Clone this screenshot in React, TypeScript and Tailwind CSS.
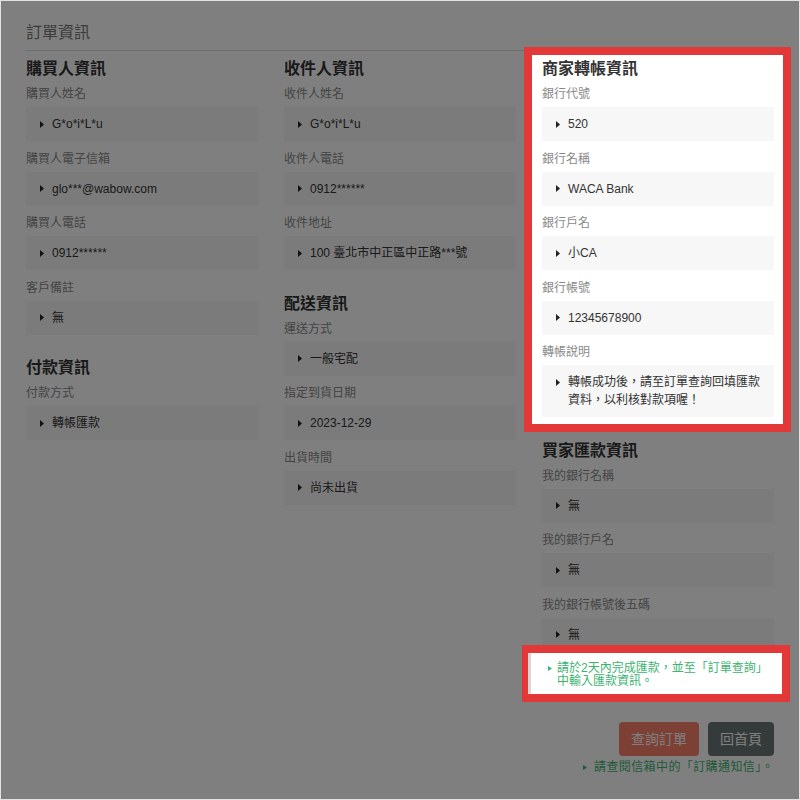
import React from "react";

function Caret({ color = "#222", w = 4, h = 7 }: { color?: string; w?: number; h?: number }) {
  return (
    <svg width={w} height={h} viewBox={`0 0 ${w} ${h}`} className="block">
      <path d={`M0 0 L${w} ${h / 2} L0 ${h} Z`} fill={color} />
    </svg>
  );
}

function Field({ label, value }: { label: string; value: string }) {
  return (
    <div className="pb-[7.5px]">
      <div className="text-[12px] leading-[20px] text-[#888]">{label}</div>
      <div className="mt-[3px] flex items-start bg-[#f7f7f7] py-[8px] pl-[14px] pr-[14px] text-[12px] leading-[18px] text-[#333]">
        <span className="flex h-[18px] w-[4px] shrink-0 items-center">
          <Caret />
        </span>
        <span className="ml-[8px]">{value}</span>
      </div>
    </div>
  );
}

function Heading({ children }: { children: React.ReactNode }) {
  return <div className="mb-[3px] text-[16px] font-semibold leading-[24px] text-[#333]">{children}</div>;
}

export default function App() {
  return (
    <div className="relative h-[800px] w-[800px] overflow-hidden border border-[#e2e2e2] bg-white [font-family:'Liberation_Sans','Noto_Sans_CJK_TC',sans-serif]">
      <div className="px-[25px] pt-[21px]">
        <div className="border-b border-[#ddd] pb-[6px] text-[16px] leading-[22px] text-[#777]">訂單資訊</div>

        <div className="grid grid-cols-3 items-start gap-x-[26px]">
          {/* Column 1 */}
          <div>
            <div className="mt-[6px]">
              <Heading>購買人資訊</Heading>
              <Field label="購買人姓名" value="G*o*i*L*u" />
              <Field label="購買人電子信箱" value="glo***@wabow.com" />
              <Field label="購買人電話" value="0912******" />
              <Field label="客戶備註" value="無" />
            </div>
            <div className="mt-[14px]">
              <Heading>付款資訊</Heading>
              <Field label="付款方式" value="轉帳匯款" />
            </div>
          </div>

          {/* Column 2 */}
          <div>
            <div className="mt-[6px]">
              <Heading>收件人資訊</Heading>
              <Field label="收件人姓名" value="G*o*i*L*u" />
              <Field label="收件人電話" value="0912******" />
              <Field label="收件地址" value="100 臺北市中正區中正路***號" />
            </div>
            <div className="mt-[14px]">
              <Heading>配送資訊</Heading>
              <Field label="運送方式" value="一般宅配" />
              <Field label="指定到貨日期" value="2023-12-29" />
              <Field label="出貨時間" value="尚未出貨" />
            </div>
          </div>

          {/* Column 3 */}
          <div>
            <div className="relative z-20 mt-[6px]">
              <div className="absolute -bottom-[7.5px] -left-[18px] -right-[17px] -top-[10px] -z-10 border-[8px] border-[#e23838] bg-white" />
              <Heading>商家轉帳資訊</Heading>
              <Field label="銀行代號" value="520" />
              <Field label="銀行名稱" value="WACA Bank" />
              <Field label="銀行戶名" value="小CA" />
              <Field label="銀行帳號" value="12345678900" />
              <Field label="轉帳說明" value="轉帳成功後，請至訂單查詢回填匯款資料，以利核對款項喔！" />
            </div>
            <div className="mt-[14px]">
              <Heading>買家匯款資訊</Heading>
              <Field label="我的銀行名稱" value="無" />
              <Field label="我的銀行戶名" value="無" />
              <Field label="我的銀行帳號後五碼" value="無" />
            </div>
            <div className="relative z-20 flex items-start pb-[1px] pl-[6px] pt-[3px] text-[12px] leading-[13px] text-[#3cb371]">
              <div className="absolute -bottom-[13px] -left-[20px] -right-[16px] -top-[14px] -z-10 border-[8px] border-l-[6px] border-[#e23838] bg-white">
                <div className="h-full w-[3px] bg-[#d6d6d6]" />
              </div>
              <span className="flex h-[13px] w-[4px] shrink-0 items-center">
                <Caret color="#3cb371" w={4} h={5} />
              </span>
              <span className="ml-[5px]">請於2天內完成匯款，並至「訂單查詢」中輸入匯款資訊。</span>
            </div>
          </div>
        </div>

        <div className="mt-[33px] flex justify-end gap-[9px]">
          <button className="h-[34px] rounded-[4px] bg-[#f8806a] px-[12px] text-[14px] text-white">查詢訂單</button>
          <button className="h-[34px] rounded-[4px] bg-[#6a7674] px-[12px] text-[14px] text-white">回首頁</button>
        </div>
        <div className="mt-[2px] flex items-center justify-end text-[12px] leading-[18px] text-[#3cb371]">
          <Caret color="#3cb371" w={4} h={5} />
          <span className="ml-[7px] tracking-[0.4px]">請查閱信箱中的「訂購通知信」。</span>
        </div>
      </div>

      <div className="absolute inset-0 z-10 bg-black/50" />
    </div>
  );
}
